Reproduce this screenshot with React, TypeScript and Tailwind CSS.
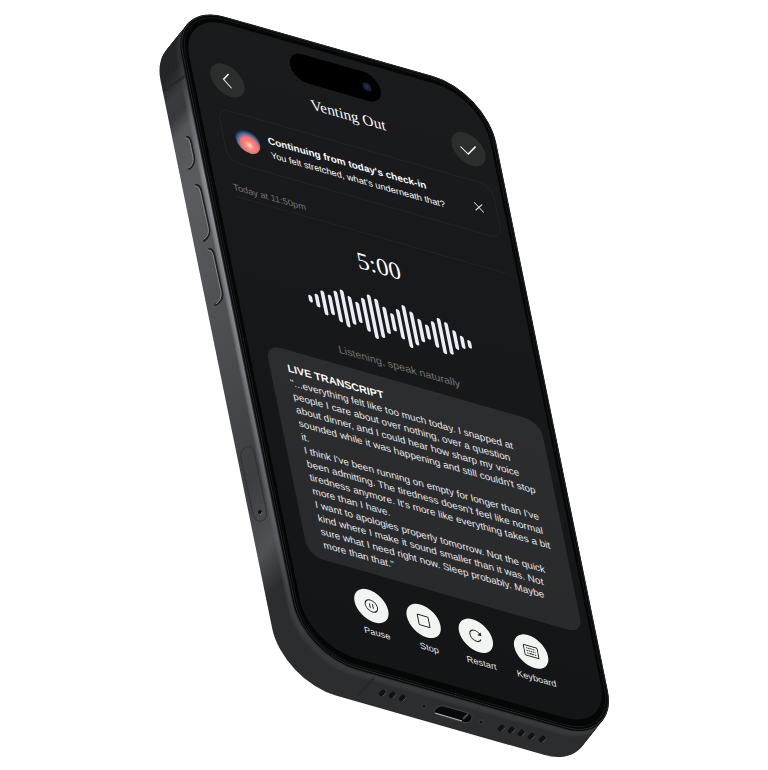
import type { ReactNode } from 'react';

const WAVE = [10, 18, 33, 27, 42, 50, 38, 28, 45, 59, 52, 36, 24, 40, 57, 45, 31, 20, 35, 48, 43, 26, 17, 11];

const TRANSCRIPT = [
  [
    '"...everything felt like too much today. I snapped at',
    'people I care about over nothing, over a question',
    'about dinner, and I could hear how sharp my voice',
    "sounded while it was happening and still couldn't stop",
    'it.',
  ],
  [
    "I think I've been running on empty for longer than I've",
    "been admitting. The tiredness doesn't feel like normal",
    "tiredness anymore. It's more like everything takes a bit",
    'more than I have.',
  ],
  [
    'I want to apologies properly tomorrow. Not the quick',
    'kind where I make it sound smaller than it was. Not',
    'sure what I need right now. Sleep probably. Maybe',
    'more than that."',
  ],
];

// The body is drawn as stacked slices from the back plate to the front glass
const SLICES = Array.from({ length: 28 }, (_, i) => i);

function sliceFill(i: number) {
  if (i > 25) return '#0b0c0d';
  if (i > 24) return '#303134';
  if (i > 19) return 'url(#rim)';
  return 'url(#metal)';
}

function PhoneBody() {
  return (
    <svg viewBox="0 0 768 770" className="h-[770px] w-[768px]" aria-hidden="true">
      <defs>
        <linearGradient id="metal" gradientUnits="userSpaceOnUse" x1="180" y1="20" x2="350" y2="750">
          <stop offset="0" stopColor="#242527" />
          <stop offset="0.04" stopColor="#3a3b3e" />
          <stop offset="0.07" stopColor="#38393c" />
          <stop offset="0.1" stopColor="#54565a" />
          <stop offset="0.2" stopColor="#5a5c60" />
          <stop offset="0.45" stopColor="#4c4e52" />
          <stop offset="0.7" stopColor="#3d3e41" />
          <stop offset="0.82" stopColor="#505154" />
          <stop offset="0.89" stopColor="#2c2d2f" />
          <stop offset="1" stopColor="#2c2d2f" />
        </linearGradient>
        <linearGradient id="rim" gradientUnits="userSpaceOnUse" x1="180" y1="20" x2="350" y2="750">
          <stop offset="0" stopColor="#303134" />
          <stop offset="0.08" stopColor="#66686c" />
          <stop offset="0.2" stopColor="#9a9ca0" />
          <stop offset="0.5" stopColor="#8c8e92" />
          <stop offset="0.8" stopColor="#626366" />
          <stop offset="0.9" stopColor="#4c4d50" />
          <stop offset="1" stopColor="#3c3d40" />
        </linearGradient>
      </defs>

      {SLICES.map((i) => (
        <rect
          key={i}
          x="-9"
          y="-10"
          width="409"
          height="868"
          rx="69"
          fill={sliceFill(i)}
          fillOpacity={i > 19 && i < 25 ? 0.3 : 1}
          transform={`matrix(.768 .219 .153 .751 ${180 - (27 - i) * 0.8} ${11 + (27 - i)})`}
        />
      ))}
      <g transform="matrix(.768 .219 .153 .751 180 11)">
        <rect x="-8" y="-9" width="407" height="866" rx="68" fill="#050606" stroke="#2b2c2e" strokeWidth="1.2" />
        <rect x="-5" y="-6" width="401" height="860" rx="65" fill="none" stroke="#1c1d1e" />
      </g>

      {/* antenna bands */}
      <path d="M163 91l22-15M357 696l17-18" stroke="#242527" strokeWidth="3" opacity="0.65" />

      {/* side buttons */}
      <g fill="none" strokeLinecap="round">
        <path d="M187 137q3 0 4 5l3 15q1 8-5 12" stroke="#1e1f21" strokeWidth="2" />
        <path d="M186 138q3 0 4 5l3 14q1 7-4 11" stroke="#85878b" />
        <path d="M196 185q4 0 5 5l8 37q2 9-5 14" stroke="#1e1f21" strokeWidth="2" />
        <path d="M195 186q4 0 5 5l8 36q2 8-4 12" stroke="#85878b" />
        <path d="M209 249q4 0 5 5l8 38q2 9-7 13" stroke="#1e1f21" strokeWidth="2" />
        <path d="M208 250q4 0 5 5l8 37q1 8-5 12" stroke="#85878b" />
        <path d="M246 447q6-3 8 5l12 57q2 10-4 12t-9-7l-12-56q-1-8 5-11z" stroke="#303134" />
      </g>
      <circle cx="260" cy="512" r="2" fill="#0d0d0e" />
      <path d="M260 515q2-1 2-3" stroke="#999" strokeWidth="0.7" fill="none" />

      {/* speaker holes and charging port */}
      <g stroke="#101112" strokeWidth="4.500" strokeLinecap="round">
        <path d="M381 694l2-2M391 696l2-2M401 699l2-2" />
        <path d="M500 729l2-2M510 731l2-2M520 734l2-2M530 737l2-2M541 740l2-2" />
      </g>
      <g stroke="#55575a" strokeWidth="0.8" strokeLinecap="round">
        <path d="M383 696l3-3M393 698l3-3M403 701l3-3" />
        <path d="M502 731l3-3M512 733l3-3M522 736l3-3M532 739l3-3M543 742l3-3" />
      </g>
      <path d="M434 711q4-6 10-5l24 7q6 2 3 7-2 4-8 2l-27-8q-3-1-2-3z" fill="#08090a" stroke="#505155" strokeWidth="0.8" />
      <path d="M435 713l27 8" stroke="#b5b6b8" strokeWidth="1.2" />
      <path d="M463 719l5-5" stroke="#4a4b4e" strokeWidth="2" />
      <circle cx="424" cy="706" r="2" fill="#141516" stroke="#4a4b4e" strokeWidth="0.6" />
      <circle cx="481" cy="722" r="2" fill="#141516" stroke="#4a4b4e" strokeWidth="0.6" />
    </svg>
  );
}

function ControlButton({ label, children }: { label: string; children: ReactNode }) {
  return (
    <button type="button" className="flex min-w-11 flex-col items-center gap-1.5 text-xs leading-4 text-[#e4e5e5]">
      <span className="flex size-11 items-center justify-center rounded-full bg-[#f1f5f2]">
        <svg viewBox="0 0 20 20" className="size-5" fill="none" stroke="#1b1d1e" strokeWidth="1.3" aria-hidden="true">
          {children}
        </svg>
      </span>
      {label}
    </button>
  );
}

function Screen() {
  return (
    <div className="absolute top-0 left-0 w-[392px] origin-top-left transform-[matrix(.768,.219,.153,.751,180,11)] overflow-hidden rounded-[60px] bg-linear-to-b from-[#191b1c] to-[#131516] pt-3 pb-9 text-white">
      <div className="mx-auto flex h-[39px] w-[118px] items-center justify-end rounded-full bg-black pr-3">
        <span className="size-3 rounded-full bg-radial from-[#24345c] to-[#080b14]" />
      </div>

      <div className="pr-[10px] pl-6">
        <header className="mt-[6px] flex items-center justify-between">
          <button type="button" aria-label="Back" className="flex size-11 items-center justify-center rounded-full bg-[#2c2d2d]">
            <svg viewBox="0 0 24 24" className="size-6" fill="none" stroke="#f0f0f0" strokeWidth="1.7" strokeLinecap="round">
              <path d="M15 3L7 12l8 9" />
            </svg>
          </button>
          <h1 className="font-['Liberation_Serif',serif] text-xl leading-7">Venting Out</h1>
          <button type="button" aria-label="Done" className="flex size-11 items-center justify-center rounded-full bg-[#2c2d2d]">
            <svg viewBox="0 0 24 24" className="size-6" fill="none" stroke="#f0f0f0" strokeWidth="1.7" strokeLinecap="round">
              <path d="M2 12l8 7L22 6" />
            </svg>
          </button>
        </header>

        <section className="mt-5 flex h-[72px] items-center rounded-2xl border border-[#262829] px-4">
          <span className="size-8 shrink-0 rounded-full bg-[radial-gradient(circle_at_54%_66%,#ffd9c4_0%,#f9897c_20%,#ee6f70_42%,#3d70a8_56%,#2a527d_62%,transparent_74%)]" />
          <div className="ml-3 flex-1 whitespace-nowrap">
            <h2 className="text-[13px] leading-5 font-bold">Continuing from today's check-in</h2>
            <p className="text-xs leading-[18px]">You felt stretched, what's underneath that?</p>
          </div>
          <button type="button" aria-label="Dismiss">
            <svg viewBox="0 0 14 14" className="size-3.5" stroke="#e8e8e8" strokeWidth="1.2" strokeLinecap="round">
              <path d="M2 2l10 10M12 2L2 12" />
            </svg>
          </button>
        </section>

        <p className="mt-6 border-b border-[#292b2c] pb-0.5 text-xs leading-5 text-[#757677]">Today at 11:50pm</p>

        <p className="mt-5 text-center font-['Liberation_Serif',serif] text-[32px] leading-10">5:00</p>
        <div className="mt-6 flex h-[60px] items-center justify-center gap-1">
          {WAVE.map((height, index) => (
            <span key={index} className="w-[5px] rounded-full bg-[#ebecf6]" style={{ height }} />
          ))}
        </div>
        <p className="mt-5 text-center text-sm leading-5 text-[#747576]">Listening, speak naturally</p>

        <section className="mt-3 rounded-[20px] bg-linear-to-b from-[#2c2d2f] to-[#292a2c] pt-4 pb-3 pl-6 whitespace-nowrap">
          <h2 className="text-sm leading-[18px] font-bold">LIVE TRANSCRIPT</h2>
          <div className="mt-0.5 text-[13px] leading-[18px] text-[#e9e9ea]">
            {TRANSCRIPT.map((lines) => (
              <p key={lines[0]}>
                {lines.map((line) => (
                  <span key={line} className="block">
                    {line}
                  </span>
                ))}
              </p>
            ))}
          </div>
        </section>

        <div className="mt-6 flex justify-center gap-6">
          <ControlButton label="Pause">
            <circle cx="10" cy="10" r="8" />
            <path d="M8 7v6M12 7v6" />
          </ControlButton>
          <ControlButton label="Stop">
            <rect x="3" y="3" width="14" height="14" rx="1" />
          </ControlButton>
          <ControlButton label="Restart">
            <path d="M16 13.500A7.300 7.300 0 1 1 16 6.500" />
            <path d="M17.500 3.500v5h-5z" fill="#1b1d1e" stroke="none" />
          </ControlButton>
          <ControlButton label="Keyboard">
            <rect x="1" y="3" width="18" height="14" rx="1" />
            <path d="M4 6.500h12M4 10h12" strokeDasharray="2 .8" />
            <path d="M4 13.500h2M7 13.500h6M14 13.500h2" />
          </ControlButton>
        </div>
      </div>
    </div>
  );
}

export default function App() {
  return (
    <main className="flex min-h-screen items-start justify-center overflow-hidden bg-white font-['Liberation_Sans',Arial,sans-serif]">
      <div className="relative shrink-0">
        <PhoneBody />
        <Screen />
      </div>
    </main>
  );
}
